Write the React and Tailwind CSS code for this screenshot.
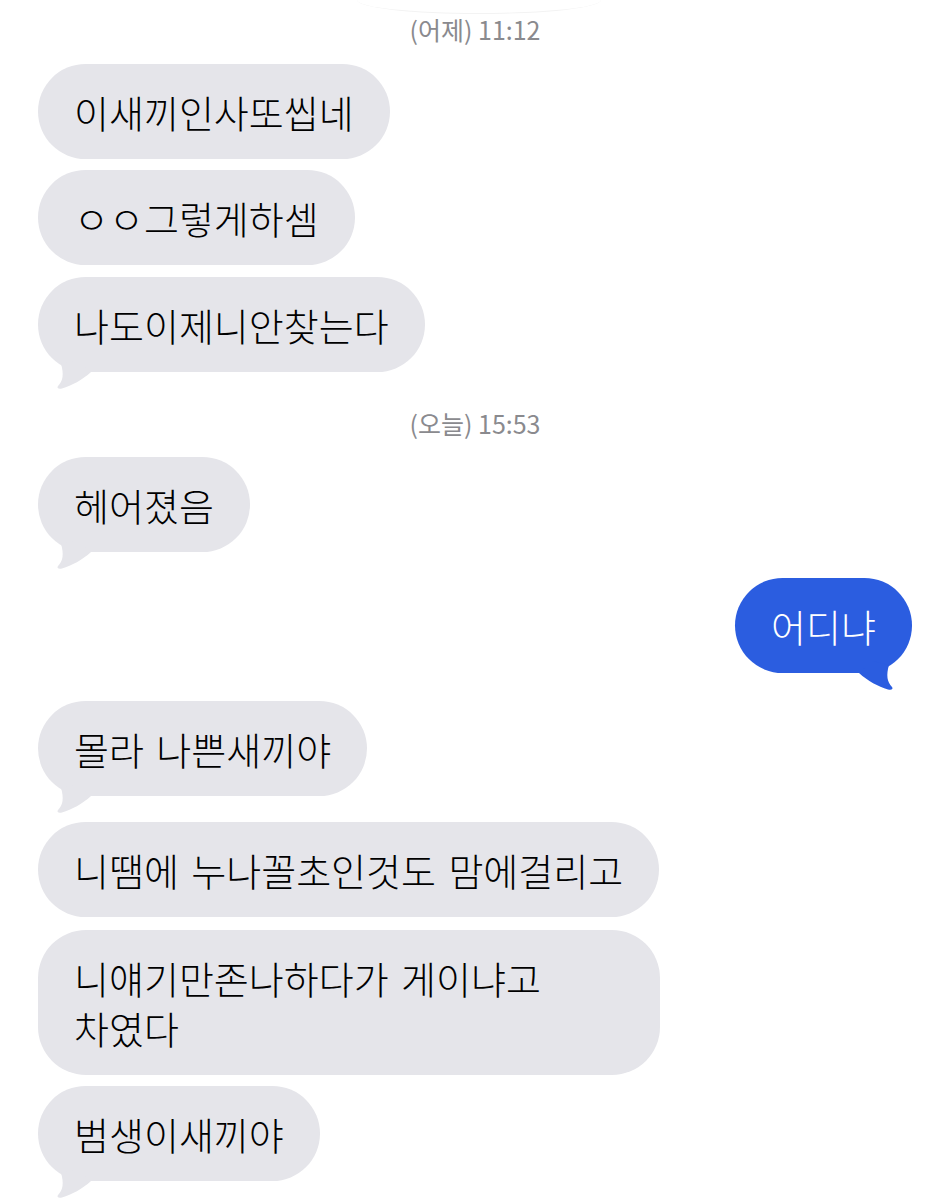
import React from "react";

// Chat thread: grey bubbles are incoming, blue is outgoing.
// `gap` is the space above each row, `tail` marks the last bubble of a run.
const thread = [
  { kind: "time", label: "(어제)", time: "11:12", gap: "mt-0" },
  { kind: "in", text: "이새끼인사또씹네", gap: "mt-[20px]" },
  { kind: "in", text: "ㅇㅇ그렇게하셈", gap: "mt-[11px]" },
  { kind: "in", text: "나도이제니안찾는다", gap: "mt-[12px]", tail: true },
  { kind: "time", label: "(오늘)", time: "15:53", gap: "mt-[36px]" },
  { kind: "in", text: "헤어졌음", gap: "mt-[19px]", tail: true },
  { kind: "out", text: "어디냐", gap: "mt-[26px]", tail: true },
  { kind: "in", text: "몰라 나쁜새끼야", gap: "mt-[28px]", tail: true },
  { kind: "in", text: "니땜에 누나꼴초인것도 맘에걸리고", gap: "mt-[26px]" },
  {
    kind: "in",
    lines: ["니얘기만존나하다가 게이냐고", "차였다"],
    gap: "mt-[13px]",
    wide: true,
  },
  { kind: "in", text: "범생이새끼야", gap: "mt-[11px]", tail: true },
];

// Little hook under the bubble corner, drawn for the left side and mirrored for the right.
function Tail({ out }) {
  return (
    <svg
      viewBox="0 0 60 40"
      className={`absolute bottom-[-18px] h-[40px] w-[60px] ${
        out ? "right-0 -scale-x-100" : "left-0"
      }`}
    >
      <path
        d="M23 14 C26 24 25 31 20 36 C18.5 38 20.5 39.5 24 38.5 C34 35.5 44 30 53 22 L40 10 Z"
        fill={out ? "#2b5de0" : "#e5e5ea"}
      />
    </svg>
  );
}

function Bubble({ item }) {
  const out = item.kind === "out";
  return (
    <div className={`flex ${out ? "justify-end" : "justify-start"} ${item.gap}`}>
      <div
        className={`relative rounded-[48px] px-[36px] py-[22.5px] text-[38px] font-light leading-[50px] [word-spacing:4px] ${
          out ? "bg-[#2b5de0] text-white" : "bg-[#e5e5ea] text-black"
        } ${item.wide ? "w-[622px]" : "w-fit"}`}
      >
        {item.tail && <Tail out={out} />}
        <p className="relative whitespace-nowrap">
          {item.lines
            ? item.lines.map((line, i) => (
                <React.Fragment key={i}>
                  {i > 0 && <br />}
                  {line}
                </React.Fragment>
              ))
            : item.text}
        </p>
      </div>
    </div>
  );
}

function TimeStamp({ item }) {
  return (
    <p
      className={`text-center text-[25px] leading-[30px] text-[#8a8a8e] ${item.gap}`}
    >
      {item.label} {item.time}
    </p>
  );
}

export default function App() {
  return (
    <div className="h-[1199px] w-[951px] overflow-hidden bg-white pl-[38px] pr-[39px] font-['Noto_Sans_CJK_KR','Noto_Sans',sans-serif]">
      {/* edge of the element scrolled off above */}
      <div className="flex h-[14px] justify-center">
        <div className="ml-[8px] h-[14px] w-[244px] rounded-b-[122px_14px] border-b border-[#f3f3f3]" />
      </div>

      {thread.map((item, i) =>
        item.kind === "time" ? (
          <TimeStamp key={i} item={item} />
        ) : (
          <Bubble key={i} item={item} />
        )
      )}
    </div>
  );
}
